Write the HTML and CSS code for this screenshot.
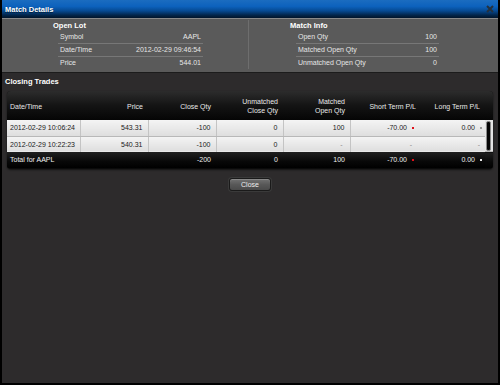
FILE: index.html
```html
<!DOCTYPE html>
<html lang="en">
<head>
  <meta charset="UTF-8">
  <title>Match Details</title>
  <link rel="stylesheet" href="styles.css">
</head>
<body>
  <div class="dialog">
    <div class="titlebar">
      <span class="title">Match Details</span>
      <svg class="close-x" width="8" height="8" viewBox="0 0 8 8">
        <path d="M1 1 L7 7 M7 1 L1 7" stroke="#25313d" stroke-width="2"/>
      </svg>
    </div>

    <div class="summary">
      <div class="group lot">
        <h2>Open Lot</h2>
        <div class="rows">
          <div class="row"><span>Symbol</span><span>AAPL</span></div>
          <div class="row"><span>Date/Time</span><span>2012-02-29 09:46:54</span></div>
          <div class="row"><span>Price</span><span>544.01</span></div>
        </div>
      </div>
      <div class="group info">
        <h2>Match Info</h2>
        <div class="rows">
          <div class="row"><span>Open Qty</span><span>100</span></div>
          <div class="row"><span>Matched Open Qty</span><span>100</span></div>
          <div class="row"><span>Unmatched Open Qty</span><span>0</span></div>
        </div>
      </div>
    </div>

    <div class="content">
      <h2>Closing Trades</h2>
      <div class="grid">
        <table>
          <colgroup>
            <col style="width:73px"><col style="width:68px"><col style="width:68px">
            <col style="width:67px"><col style="width:67px"><col style="width:67px">
            <col style="width:68px"><col style="width:8px">
          </colgroup>
          <thead>
            <tr>
              <th class="left">Date/Time</th>
              <th>Price</th>
              <th>Close Qty</th>
              <th>Unmatched<br>Close Qty</th>
              <th>Matched<br>Open Qty</th>
              <th class="tight">Short Term P/L</th>
              <th>Long Term P/L</th>
              <th></th>
            </tr>
          </thead>
          <tbody>
            <tr>
              <td class="left">2012-02-29 10:06:24</td>
              <td class="sep">543.31</td>
              <td class="sep">-100</td>
              <td class="sep">0</td>
              <td class="sep">100</td>
              <td class="sep pl">-70.00<i class="dot red"></i></td>
              <td class="pl">0.00<i class="dot grey"></i></td>
              <td class="scroll" rowspan="2"><div class="thumb"></div></td>
            </tr>
            <tr>
              <td class="left">2012-02-29 10:22:23</td>
              <td class="sep">540.31</td>
              <td class="sep">-100</td>
              <td class="sep">0</td>
              <td class="sep"><span class="na">-</span></td>
              <td class="sep pl"><span class="na">-</span></td>
              <td class="pl"><span class="na">-</span></td>
            </tr>
          </tbody>
          <tfoot>
            <tr>
              <td class="left">Total for AAPL</td>
              <td></td>
              <td>-200</td>
              <td>0</td>
              <td>100</td>
              <td class="pl">-70.00<i class="dot red"></i></td>
              <td class="pl">0.00<i class="dot white"></i></td>
              <td></td>
            </tr>
          </tfoot>
        </table>
      </div>
      <div class="actions">
        <button type="button">Close</button>
      </div>
    </div>
  </div>
</body>
</html>
```

FILE: styles.css
```css
body {
  margin: 0;
  font-family: "Liberation Sans", Arial, sans-serif;
  font-size: 7px;
  background: #000;
}
.dialog {
  width: 500px;
  height: 385px;
  box-sizing: border-box;
  border: 2px solid #000;
  border-top: none;
  background: #2d2b2c;
  display: flex;
  flex-direction: column;
}
.titlebar {
  height: 18px;
  display: flex;
  align-items: center;
  justify-content: space-between;
  padding: 0 4px 0 3px;
  background: linear-gradient(#1b6cc0, #0d62bd 35%, #064a93 60%, #022448 85%, #01142a);
}
.title {
  color: #fff;
  font-weight: bold;
  font-size: 7.5px;
  text-shadow: 0 1px 0 #002040;
}
.summary {
  display: grid;
  grid-template-columns: 247px 1fr;
  background: #5a5a5a;
  border-top: 1px solid #8a8a8a;
  border-bottom: 1px solid #1c1c1c;
  padding: 1px 0 3px;
}
.group h2 {
  margin: 0;
  font-size: 7.5px;
  line-height: 11px;
  color: #fff;
}
.lot {
  padding-left: 51px;
  border-right: 1px solid #6e6e6e;
}
.info {
  padding-left: 41px;
}
.rows {
  margin-left: 5px;
  width: 145px;
}
.info .rows {
  margin-left: 6px;
  width: 143px;
}
.row {
  display: flex;
  justify-content: space-between;
  height: 12px;
  line-height: 12px;
  padding: 0 2px;
  color: #e6e6e6;
  border-bottom: 1px solid #777;
}
.row:last-child {
  border-bottom: none;
}
.content {
  padding: 3px 5px 0;
}
.content h2 {
  margin: 0 0 4px -2px;
  font-size: 7.5px;
  line-height: 11px;
  color: #fff;
}
.grid {
  background: #0a0a0a;
  border-radius: 4px;
  overflow: hidden;
  padding-bottom: 1px;
  box-shadow: 0 1px 2px rgba(0,0,0,0.6);
}
table {
  width: 486px;
  table-layout: fixed;
  border-collapse: collapse;
}
th, td {
  padding: 0 5px 0 0;
  text-align: right;
  white-space: nowrap;
  font-weight: normal;
}
th {
  height: 28px;
  line-height: 9px;
  color: #e8e8e8;
  padding-top: 1px;
  background: linear-gradient(#2c2c2c, #141414 50%, #050505);
}
th.tight {
  padding-right: 1px;
}
.left {
  text-align: left;
  padding-left: 3px;
}
tbody td {
  color: #1a1a1a;
  height: 15px;
  background: linear-gradient(#f4f4f4, #dedede);
  border-bottom: 1px solid #b8b8b8;
}
tbody tr:last-child td {
  height: 14px;
  border-bottom: none;
}
td.sep {
  border-left: 1px solid #c4c4c4;
}
td.pl {
  padding-right: 3px;
}
.dot {
  display: inline-block;
  width: 2px;
  height: 2px;
  margin-left: 5px;
  vertical-align: 1px;
}
.red { background: #e0101a; }
.grey { background: #9a9a9a; }
.white { background: #e8e8e8; }
.na {
  color: #8a8a8a;
  padding-right: 2px;
}
td.scroll {
  padding: 0;
  background: #e4e4e4;
  vertical-align: top;
}
.thumb {
  width: 3px;
  height: 28px;
  margin: 1px 0 0 1px;
  background: #050505;
  border: 1px solid #8a8a8a;
  border-radius: 2px;
}
tfoot td {
  color: #f0f0f0;
  height: 16px;
  background: linear-gradient(#202020, #080808 60%, #000);
}
.actions {
  display: flex;
  justify-content: center;
  margin-top: 9px;
}
button {
  width: 42px;
  height: 13px;
  padding: 0;
  font-family: "Liberation Sans", Arial, sans-serif;
  font-size: 7px;
  color: #eee;
  background: linear-gradient(#727272, #585858 50%, #4a4a4a);
  border: 1px solid #1a1a1a;
  border-radius: 3px;
  box-shadow: 0 0 0 1px #3a3a3a, inset 0 1px 0 #888;
  cursor: pointer;
}
```
